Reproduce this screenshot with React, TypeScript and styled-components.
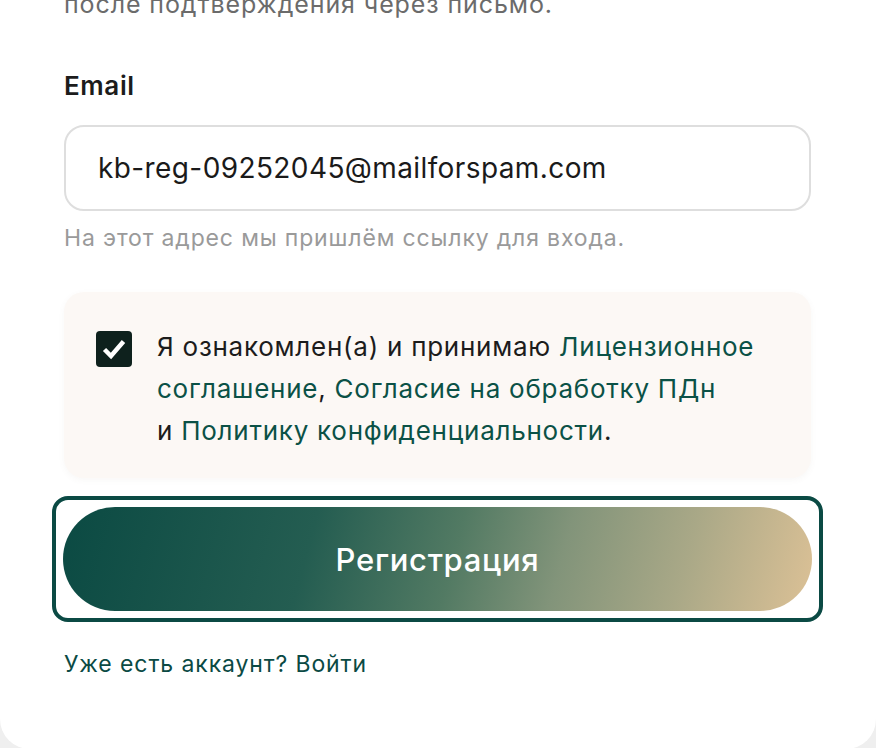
import React from "react";
import styled, { createGlobalStyle } from "styled-components";

const GlobalStyle = createGlobalStyle`
  html, body {
    margin: 0;
    padding: 0;
    background: #efefef;
    font-family: Inter, "Noto Sans", "Liberation Sans", sans-serif;
    overflow: hidden;
  }
`;

const Card = styled.div`
  margin-top: -12px;
  background: #ffffff;
  border-radius: 0 0 30px 30px;
  padding: 0 65px 70px 64px;
  display: flex;
  flex-direction: column;
`;

const Intro = styled.p`
  margin: 0;
  font-size: 25px;
  line-height: 33px;
  letter-spacing: 0.9px;
  color: #6b6b6b;
`;

const FieldLabel = styled.label`
  margin-top: 49px;
  font-size: 26px;
  line-height: 32px;
  letter-spacing: 0.6px;
  font-weight: 600;
  color: #1c1c1c;
`;

const EmailInput = styled.input`
  margin-top: 23px;
  box-sizing: border-box;
  height: 86px;
  width: 100%;
  padding: 0 32px;
  border: 2px solid #dedede;
  border-radius: 20px;
  background: #fff;
  font-family: inherit;
  font-size: 28px;
  letter-spacing: 0.4px;
  color: #1a1a1a;
  outline: none;
`;

const Hint = styled.div`
  margin-top: 13px;
  font-size: 23px;
  line-height: 28px;
  letter-spacing: 0.85px;
  color: #9a9a9a;
`;

const ConsentBox = styled.div`
  margin-top: 40px;
  display: flex;
  align-items: flex-start;
  gap: 25px;
  padding: 34px 20px 26px 32px;
  background: #fcf8f5;
  border-radius: 20px;
  box-shadow: 0 2px 6px rgba(120, 100, 80, 0.05);
`;

const CheckBox = styled.span`
  flex: 0 0 36px;
  width: 36px;
  height: 36px;
  margin-top: 5px;
  border-radius: 4px;
  background: #0e211d;
  display: flex;
  align-items: center;
  justify-content: center;
`;

const ConsentText = styled.div`
  font-size: 26px;
  line-height: 42px;
  letter-spacing: 0.75px;
  color: #1c1c1c;
`;

const DocLink = styled.a`
  color: #0b5146;
  text-decoration: none;
`;

const ButtonFrame = styled.div`
  margin: 18px -12px 0;
  border: 4px solid #0b4a44;
  border-radius: 16px;
  padding: 7px;
`;

const SubmitButton = styled.button`
  display: block;
  width: 100%;
  height: 104px;
  border: none;
  border-radius: 52px;
  background: linear-gradient(
    105deg,
    #0b4a43 0%,
    #245d51 33%,
    #527a63 52%,
    #82947a 66%,
    #a9a887 82%,
    #dcc196 100%
  );
  color: #ffffff;
  font-family: inherit;
  font-size: 31px;
  font-weight: 500;
  letter-spacing: 0.7px;
`;

const LoginLink = styled.a`
  margin-top: 27px;
  font-size: 23px;
  line-height: 30px;
  letter-spacing: 0.9px;
  color: #0b4a44;
  text-decoration: none;
`;

export default function App() {
  return (
    <>
      <GlobalStyle />
      <Card>
        <Intro>после подтверждения через письмо.</Intro>
        <FieldLabel htmlFor="email">Email</FieldLabel>
        <EmailInput id="email" type="email" defaultValue="kb-reg-09252045@mailforspam.com" />
        <Hint>На этот адрес мы пришлём ссылку для входа.</Hint>
        <ConsentBox>
          <CheckBox>
            <svg width="26" height="22" viewBox="0 0 26 22">
              <path d="M3.5 11.5l6.5 6.5L22.5 3.5" fill="none" stroke="#fff" strokeWidth="4.5" strokeLinejoin="miter" />
            </svg>
          </CheckBox>
          <ConsentText>
            Я ознакомлен(а) и принимаю <DocLink href="#">Лицензионное соглашение</DocLink>,{" "}
            <DocLink href="#">Согласие на обработку ПДн</DocLink>
            <br />и <DocLink href="#">Политику конфиденциальности</DocLink>.
          </ConsentText>
        </ConsentBox>
        <ButtonFrame>
          <SubmitButton type="button">Регистрация</SubmitButton>
        </ButtonFrame>
        <LoginLink href="#">Уже есть аккаунт? Войти</LoginLink>
      </Card>
    </>
  );
}
